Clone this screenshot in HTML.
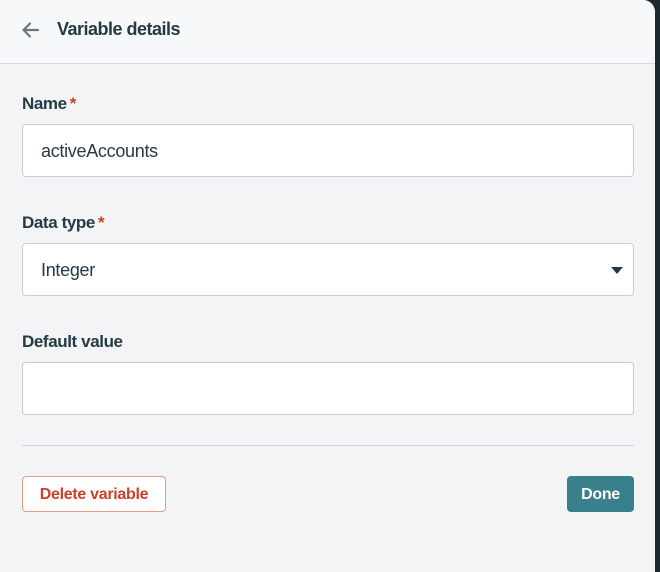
<!DOCTYPE html>
<html><head><style>
body{margin:0;width:660px;height:572px;background:#1e2a2e;font-family:"Liberation Sans",sans-serif;overflow:hidden}
.panel{position:absolute;left:0;top:0;width:655px;height:572px;background:#f3f4f6;border-top-right-radius:12px;overflow:hidden}
.hdr{height:63px;background:#f7f8f9;border-bottom:1px solid #d5d8dc;position:relative}
.hdr .t{position:absolute;left:57px;top:19px;font-size:18px;font-weight:bold;color:#263a45;letter-spacing:-0.5px}
.lbl{position:absolute;left:22px;font-size:17px;font-weight:bold;color:#263a45;letter-spacing:-0.4px}
.lbl span{color:#c8412a;margin-left:3px}
.inp{position:absolute;left:22px;width:610px;height:50px;background:#fff;border:1px solid #c9cdd2;border-radius:4px;box-sizing:content-box;font-size:18px;color:#263a45;line-height:53px;text-indent:18px;letter-spacing:-0.3px}
.btn{position:absolute;top:476px;height:34px;border-radius:4px;font-size:16px;font-weight:bold;line-height:36px;text-align:center;letter-spacing:-0.3px}
</style></head><body>
<div class="panel">
<div class="hdr">
<svg style="position:absolute;left:21px;top:21px" width="20" height="18" viewBox="0 0 20 18"><path d="M17 9H3M9 2.5L2.5 9 9 15.5" stroke="#6b7780" stroke-width="2.2" fill="none" stroke-linecap="round" stroke-linejoin="round"/></svg>
<div class="t">Variable details</div>
</div>
<div class="lbl" style="top:94px">Name<span>*</span></div>
<div class="inp" style="top:124px;height:51px">activeAccounts</div>
<div class="lbl" style="top:213px">Data type<span>*</span></div>
<div class="inp" style="top:243px;height:51px">Integer
<svg style="position:absolute;right:10px;top:23px" width="12" height="8"><path d="M0 0H12L6 7Z" fill="#263a45"/></svg></div>
<div class="lbl" style="top:332px">Default value</div>
<div class="inp" style="top:362px;height:51px"></div>
<div style="position:absolute;left:22px;top:445px;width:612px;height:1px;background:#d3d6da"></div>
<div class="btn" style="left:22px;width:142px;background:#fff;border:1px solid #e59a88;color:#c8412a">Delete variable</div>
<div class="btn" style="left:567px;width:67px;height:36px;line-height:38px;background:#3a7f8c;color:#fff">Done</div>
</div>
</body></html>
